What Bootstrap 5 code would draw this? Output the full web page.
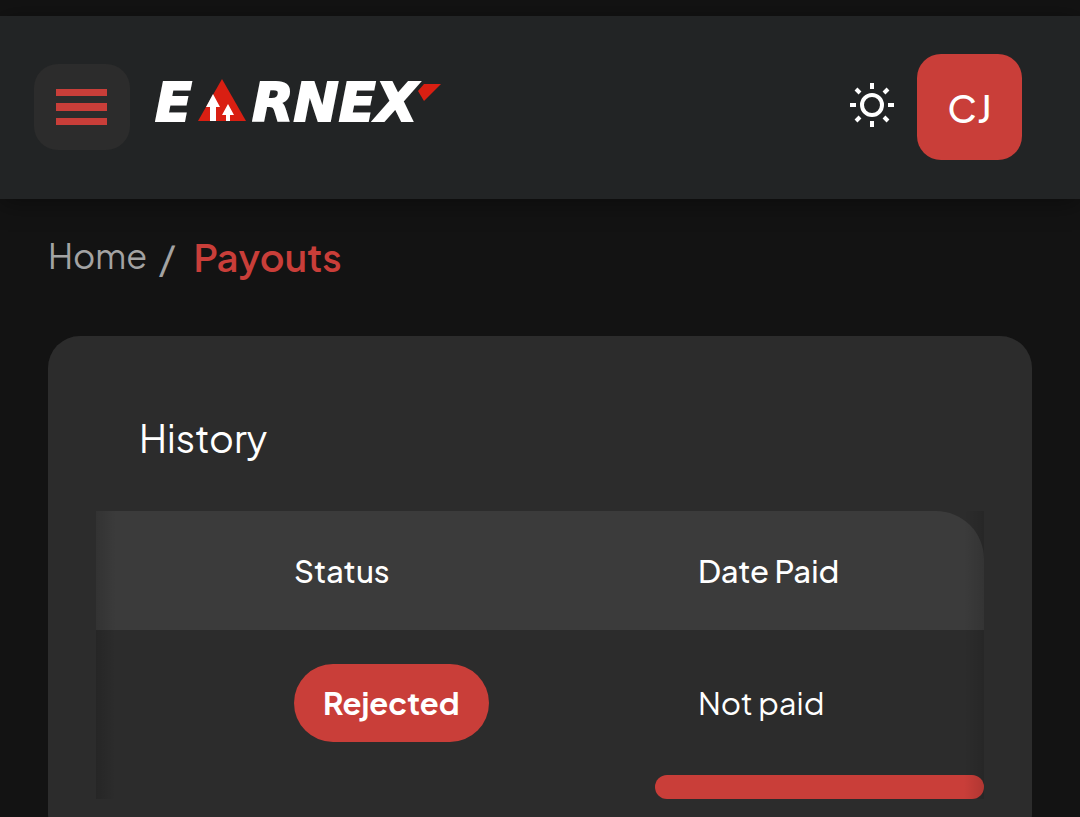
<!DOCTYPE html>
<html lang="en">
<head>
<meta charset="utf-8">
<meta name="viewport" content="width=device-width, initial-scale=1">
<title>Earnex – Payouts</title>
<link href="https://cdn.jsdelivr.net/npm/bootstrap@5.3.0/dist/css/bootstrap.min.css" rel="stylesheet">
<style>
  :root { --brand: #c93e39; --panel: #2c2c2c; }
  body { background: #131313; color: #fff; font-family: "Plus Jakarta Sans", Inter, "Open Sans", sans-serif; font-size: 31px; line-height: 40px; }
  .top-bar { background: #222425; margin-top: 16px; padding: 38px 58px 39px 34px; box-shadow: 0 4px 24px rgba(0,0,0,.4); }
  .menu-btn { width: 96px; height: 86px; border-radius: 24px; background: var(--panel); }
  .menu-btn:hover { background: #383838; }
  .logo { margin-left: 20px; }
  .logo svg { overflow: visible; }
  .avatar { width: 105px; height: 106px; border-radius: 24px; background: var(--brand); color: #fff; font-size: 38px; font-weight: 500; }
  .avatar:hover { background: #b33530; color: #fff; }
  .brand-word { font: italic 700 54px "DejaVu Sans", sans-serif; fill: #fff; stroke: #fff; stroke-width: 2px; }
  .theme-btn { margin-right: 23px; }
  .crumbs { padding: 37px 48px 0; }
  .crumbs a { color: #a3a3a3; font-size: 34px; font-weight: 400; }
  .crumbs .slash { color: #a3a3a3; font-size: 38px; font-weight: 400; padding: 0 18px 0 12px; }
  .crumbs .current { color: var(--brand); font-size: 38px; font-weight: 600; }
  .history { background: var(--panel); border-radius: 32px; margin: 59px 48px 0; padding: 78px 48px 48px; }
  .history h1 { font-size: 38px; line-height: 48px; font-weight: 400; padding-left: 43px; margin-bottom: 49px; }
  .scroller { position: relative; }
  .scroller::after { content: ""; position: absolute; inset: 0; pointer-events: none;
    background: linear-gradient(90deg, rgba(0,0,0,.14), transparent 20px, transparent calc(100% - 20px), rgba(0,0,0,.12)); }
  .payouts { table-layout: fixed; width: 100%; color: #fff; }
  .payouts th, .payouts td { padding: 0; vertical-align: middle; }
  .payouts th { height: 119px; background: #3b3b3b; font-weight: 500; }
  .payouts th:last-child { border-top-right-radius: 48px; }
  .payouts td { height: 145px; }
  .c-id { width: 22.3%; }
  .c-status { width: 45.5%; }
  .pill { display: inline-block; background: var(--brand); border-radius: 40px; padding: 19px 29px; font-weight: 700; }
  .thumb { height: 24px; width: 37%; border-radius: 12px; background: var(--brand); }
</style>
</head>
<body>
<header class="top-bar d-flex align-items-center">
  <button class="menu-btn btn border-0 p-0 d-flex align-items-center justify-content-center" type="button" aria-label="Open menu">
    <svg width="52" height="38" viewBox="0 0 52 38" fill="#c93e39"><path d="M0 1h51v7H0zM0 15h51v8H0zM0 30h51v7H0z"/></svg>
  </button>
  <a href="#" class="logo d-block" aria-label="Earnex">
    <svg class="d-block" width="296" height="72" viewBox="0 0 296 72">
      <text class="brand-word" x="5" y="50">E</text>
      <path fill="#d91f12" d="M72 8 96 50H48z"/>
      <path fill="#fff" d="M63 23l7 13h-4v14h-6V36h-4zM78 33l6 11h-4v6h-4v-6h-4z"/>
      <text class="brand-word" x="102" y="50">RNEX</text>
      <path fill="#d91f12" d="M274 13h17l-17 17-6-10z"/>
    </svg>
  </a>
  <button class="theme-btn btn border-0 p-0 ms-auto" type="button" aria-label="Switch theme">
    <svg class="d-block mb-1" width="44" height="44" viewBox="0 0 44 44" fill="none" stroke="#fff" stroke-width="4"><circle cx="22" cy="22" r="10"/><path d="M22 0v6M22 38v6M0 22h6M38 22h6M6 6l4 4M34 34l4 4M38 6l-4 4M10 34l-4 4"/></svg>
  </button>
  <button class="avatar btn border-0 p-0" type="button">CJ</button>
</header>

<main>
  <nav class="crumbs" aria-label="Breadcrumb">
    <ol class="list-unstyled d-flex align-items-center m-0">
      <li><a href="#" class="text-decoration-none">Home</a></li>
      <li class="slash" aria-hidden="true">/</li>
      <li class="current" aria-current="page">Payouts</li>
    </ol>
  </nav>

  <section class="history">
    <h1>History</h1>
    <div class="scroller">
      <table class="payouts">
        <colgroup><col class="c-id"><col class="c-status"><col></colgroup>
        <thead><tr><th></th><th scope="col">Status</th><th scope="col">Date Paid</th></tr></thead>
        <tbody><tr><td></td><td><span class="pill">Rejected</span></td><td>Not paid</td></tr></tbody>
      </table>
      <div class="thumb ms-auto"></div>
    </div>
  </section>
</main>
<script src="https://cdn.jsdelivr.net/npm/bootstrap@5.3.0/dist/js/bootstrap.bundle.min.js"></script>
</body>
</html>
